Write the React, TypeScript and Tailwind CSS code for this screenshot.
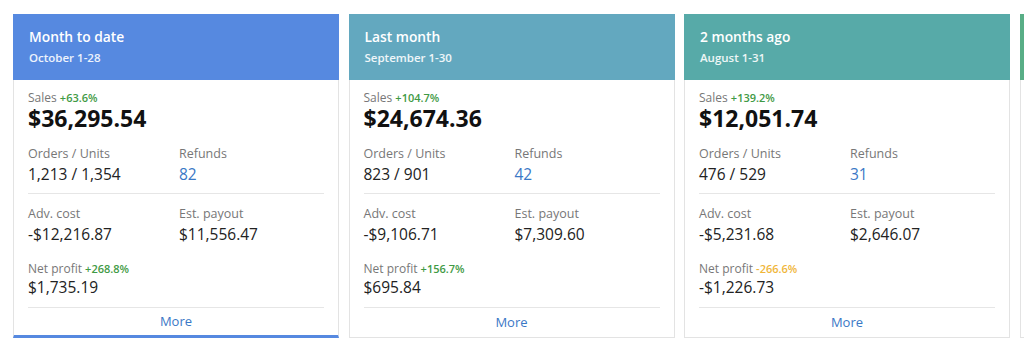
import React from "react";

type Card = {
  title: string;
  sub: string;
  header: string;
  sales: string;
  salesPct: string;
  orders: string;
  refunds: string;
  adv: string;
  payout: string;
  net: string;
  netPct: string;
  netNeg?: boolean;
  active?: boolean;
};

const cards: Card[] = [
  {
    title: "Month to date",
    sub: "October 1-28",
    header: "bg-[#5689e0]",
    sales: "$36,295.54",
    salesPct: "+63.6%",
    orders: "1,213 / 1,354",
    refunds: "82",
    adv: "-$12,216.87",
    payout: "$11,556.47",
    net: "$1,735.19",
    netPct: "+268.8%",
    active: true,
  },
  {
    title: "Last month",
    sub: "September 1-30",
    header: "bg-[#63a8bf]",
    sales: "$24,674.36",
    salesPct: "+104.7%",
    orders: "823 / 901",
    refunds: "42",
    adv: "-$9,106.71",
    payout: "$7,309.60",
    net: "$695.84",
    netPct: "+156.7%",
  },
  {
    title: "2 months ago",
    sub: "August 1-31",
    header: "bg-[#57aaa8]",
    sales: "$12,051.74",
    salesPct: "+139.2%",
    orders: "476 / 529",
    refunds: "31",
    adv: "-$5,231.68",
    payout: "$2,646.07",
    net: "-$1,226.73",
    netPct: "-266.6%",
    netNeg: true,
  },
];

function CardView({ c }: { c: Card }) {
  return (
    <div
      className={`w-[326px] h-[324px] shrink-0 flex flex-col bg-white border border-[#e3e3e3] ${
        c.active ? "border-b-[3px] border-b-[#5689e0]" : ""
      }`}
    >
      <div className={`${c.header} h-[66px] shrink-0 -mx-px -mt-px px-[16px] pt-[13px] text-white`}>
        <div className="text-[13.8px] font-semibold leading-[20px]">{c.title}</div>
        <div className="text-[11.5px] font-semibold leading-[16px] mt-[3px] text-white/90">{c.sub}</div>
      </div>
      <div className="flex-1 px-[14px] pt-[10px] flex flex-col">
        <div className="text-[12px] leading-[16px] text-[#777]">
          Sales <span className="text-[11px] font-semibold text-[#3f9a45]">{c.salesPct}</span>
        </div>
        <div className="text-[23px] font-bold leading-[24px] text-[#111]">{c.sales}</div>
        <div className="flex mt-[15px]">
          <div className="w-[151px]">
            <div className="text-[12.5px] leading-[18px] text-[#777]">Orders / Units</div>
            <div className="text-[15.5px] leading-[22px] text-[#222]">{c.orders}</div>
          </div>
          <div>
            <div className="text-[12.5px] leading-[18px] text-[#777]">Refunds</div>
            <div className="text-[15.5px] leading-[22px] text-[#3a78c6]">{c.refunds}</div>
          </div>
        </div>
        <div className="mt-[8px] border-t border-[#e6e6e6]" />
        <div className="flex mt-[11px]">
          <div className="w-[151px]">
            <div className="text-[12.5px] leading-[18px] text-[#777]">Adv. cost</div>
            <div className="text-[15.5px] leading-[22px] text-[#222]">{c.adv}</div>
          </div>
          <div>
            <div className="text-[12.5px] leading-[18px] text-[#777]">Est. payout</div>
            <div className="text-[15.5px] leading-[22px] text-[#222]">{c.payout}</div>
          </div>
        </div>
        <div className="mt-[16px] text-[12px] leading-[15px] text-[#777]">
          Net profit{" "}
          <span className={`text-[11px] font-semibold ${c.netNeg ? "text-[#f0b63a]" : "text-[#3f9a45]"}`}>
            {c.netPct}
          </span>
        </div>
        <div className="text-[15.5px] leading-[22px] text-[#222]">{c.net}</div>
        <div className="mt-[9px] border-t border-[#e6e6e6]" />
        <div className="flex-1 flex items-center justify-center text-[13px] text-[#3a78c6]">More</div>
      </div>
    </div>
  );
}

export default function App() {
  return (
    <div
      className="w-[1024px] h-[356px] bg-white overflow-hidden"
      style={{ fontFamily: '"Open Sans", "Noto Sans", sans-serif' }}
    >
      <div className="flex gap-[9.5px] pl-[13px] pt-[14px] items-start">
        {cards.map((c) => (
          <CardView key={c.title} c={c} />
        ))}
        <div className="w-[326px] h-[324px] shrink-0 flex flex-col bg-white border border-[#e3e3e3]">
          <div className="bg-[#58ae86] h-[66px] shrink-0 -mx-px -mt-px" />
        </div>
      </div>
    </div>
  );
}
